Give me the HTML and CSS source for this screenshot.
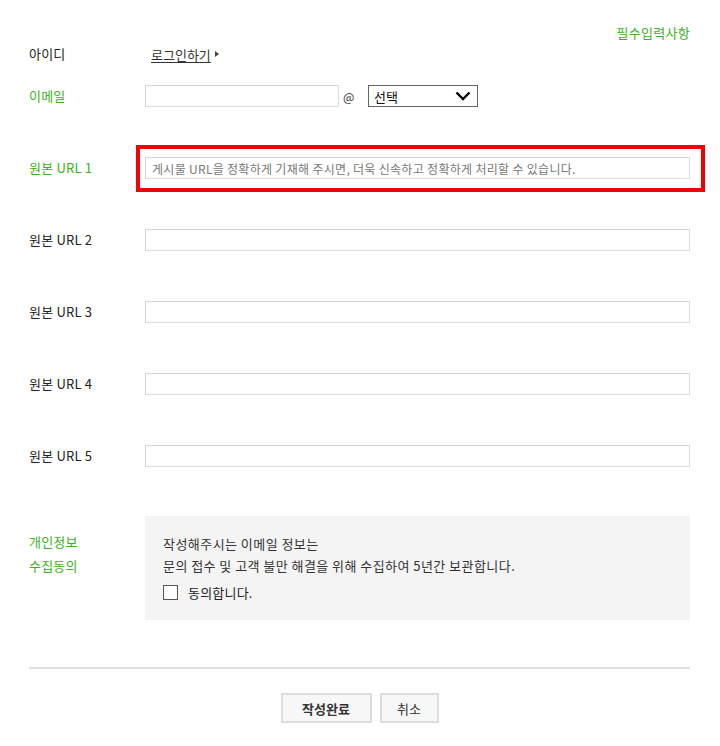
FILE: index.html
```html
<!DOCTYPE html>
<html>
<head lang="ko">
    <meta charset="UTF-8">
    <title>문의하기</title>
    <link rel="stylesheet" href="styles.css">
</head>
<body>
    <div id="wrap">
        <p class="req">필수입력사항</p>
        <div class="row row-id">
            <span class="label">아이디</span>
            <div class="field">
                <a href="#" class="login">로그인하기</a><span class="tri"></span>
            </div>
        </div>
        <div class="row">
            <span class="label green">이메일</span>
            <div class="field">
                <input type="text" class="txt email">
                <span class="at">@</span>
                <div class="sel">
                    <select>
                        <option>선택</option>
                    </select>
                    <svg class="chev" width="16" height="10" viewBox="0 0 16 10"><path d="M1.5 1.5 L8 8 L14.5 1.5" fill="none" stroke="#000" stroke-width="2.4"/></svg>
                </div>
            </div>
        </div>
        <div class="row">
            <span class="label green">원본 URL 1</span>
            <div class="field grow mark">
                <input type="text" class="txt" placeholder="게시물 URL을 정확하게 기재해 주시면, 더욱 신속하고 정확하게 처리할 수 있습니다.">
                <span class="hl"></span>
            </div>
        </div>
        <div class="row">
            <span class="label">원본 URL 2</span>
            <div class="field grow"><input type="text" class="txt"></div>
        </div>
        <div class="row">
            <span class="label">원본 URL 3</span>
            <div class="field grow"><input type="text" class="txt"></div>
        </div>
        <div class="row">
            <span class="label">원본 URL 4</span>
            <div class="field grow"><input type="text" class="txt"></div>
        </div>
        <div class="row">
            <span class="label">원본 URL 5</span>
            <div class="field grow"><input type="text" class="txt"></div>
        </div>
        <div class="agree">
            <span class="label green">개인정보<br>수집동의</span>
            <div class="agree-box">
                <p>작성해주시는 이메일 정보는</p>
                <p>문의 접수 및 고객 불만 해결을 위해 수집하여 5년간 보관합니다.</p>
                <label class="chk"><span class="box"></span>동의합니다.</label>
            </div>
        </div>
        <div class="btns">
            <button class="btn ok">작성완료</button>
            <button class="btn">취소</button>
        </div>
    </div>
</body>
</html>
```

FILE: styles.css
```css
*{
    margin: 0;
    padding: 0;
    box-sizing: border-box;
}
body{
    font-family: "Noto Sans CJK KR", "Liberation Sans", sans-serif;
    font-size: 13px;
    color: #222;
    background: #fff;
}
#wrap{
    width: 720px;
    padding: 24px 30px 0 29px;
}
.green{
    color: #3cb01e;
}
.req{
    text-align: right;
    color: #3cb01e;
    font-size: 13px;
    line-height: 18px;
    letter-spacing: 0.3px;
}
.row{
    display: flex;
    align-items: center;
    height: 22px;
    margin-bottom: 50px;
}
.row-id{
    margin-top: 1px;
    margin-bottom: 20px;
}
.label{
    width: 116px;
    flex: none;
    font-size: 13px;
    line-height: 22px;
    letter-spacing: 0.2px;
}
.field{
    display: flex;
    align-items: center;
    height: 22px;
}
.grow{
    flex: 1;
}
.login{
    margin-left: 6px;
    color: #333;
    font-size: 13px;
    text-decoration: underline;
    text-underline-offset: 2px;
}
.tri{
    width: 0;
    height: 0;
    border-left: 4px solid #444;
    border-top: 3px solid transparent;
    border-bottom: 3px solid transparent;
    margin-left: 4px;
}
.txt{
    height: 22px;
    width: 100%;
    border: 1px solid #ddd;
    border-top-color: #d4d4d4;
    border-left-color: #d4d4d4;
    padding: 0 6px;
    font-family: inherit;
    font-size: 12px;
    letter-spacing: 0.3px;
    color: #333;
    outline: none;
}
.txt::placeholder{
    color: #777;
}
.email{
    width: 194px;
}
.at{
    margin: 0 14px 0 4px;
    font-size: 12px;
    color: #333;
    width: 11px;
}
.sel{
    position: relative;
    width: 110px;
    height: 22px;
}
.sel select{
    appearance: none;
    width: 110px;
    height: 22px;
    border: 1px solid #666;
    border-radius: 0;
    background: #fff;
    padding: 0 5px;
    font-family: inherit;
    font-size: 13px;
    color: #111;
}
.chev{
    position: absolute;
    right: 7px;
    top: 6px;
    pointer-events: none;
}
.mark{
    position: relative;
}
.hl{
    position: absolute;
    left: -9px;
    right: -15px;
    top: -12px;
    bottom: -13px;
    border: 4px solid #f50000;
    pointer-events: none;
}
.agree{
    display: flex;
    margin-top: -1px;
}
.agree .label{
    line-height: 24px;
    padding-top: 14px;
}
.agree-box{
    flex: 1;
    height: 104px;
    background: #f4f4f4;
    padding: 17px 0 0 18px;
    font-size: 13px;
    letter-spacing: 0.45px;
    color: #333;
}
.agree-box p{
    line-height: 22px;
}
.chk{
    display: flex;
    align-items: center;
    margin-top: 6px;
    font-size: 13px;
    letter-spacing: 0.2px;
    color: #222;
}
.chk .box{
    width: 15px;
    height: 15px;
    border: 1px solid #555;
    background: #fff;
    margin-right: 10px;
}
.btns{
    margin-top: 47px;
    border-top: 2px solid #e0e0e0;
    padding-top: 24px;
    display: flex;
    justify-content: center;
    gap: 8px;
}
.btn{
    height: 30px;
    border: 2px solid #ddd;
    background: #f7f7f7;
    font-family: inherit;
    font-size: 13px;
    color: #333;
    padding: 0;
}
.btn.ok{
    width: 91px;
    font-weight: bold;
}
.btn:last-child{
    width: 59px;
}
```
